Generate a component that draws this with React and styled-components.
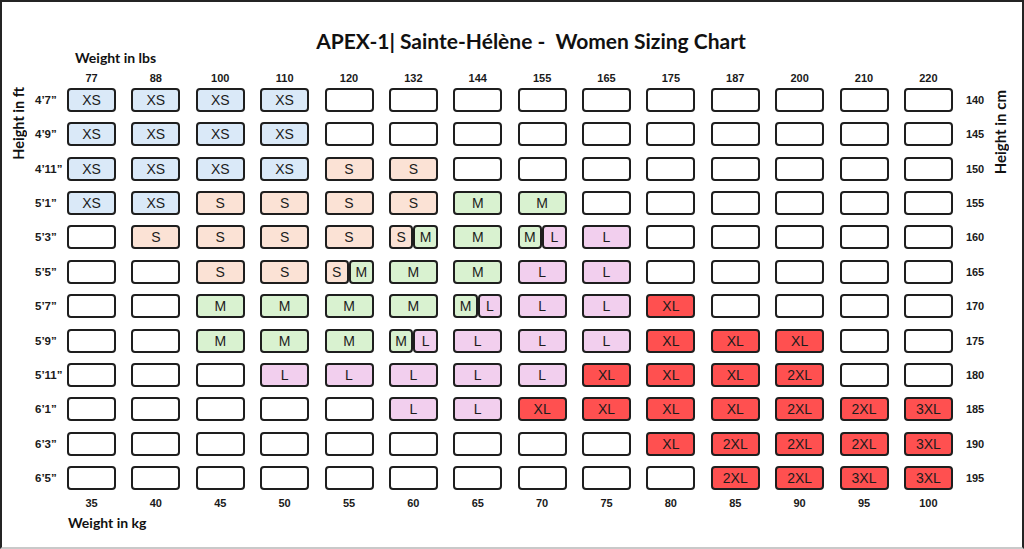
import React from 'react';
import styled, { createGlobalStyle } from 'styled-components';

const SIZE_BG = {
	XS: '#dae9f8',
	S: '#fbe2d5',
	M: '#d9f2d0',
	L: '#f2cfee',
	XL: '#ff5050',
	'2XL': '#ff5050',
	'3XL': '#ff5050',
};

const LBS = [77, 88, 100, 110, 120, 132, 144, 155, 165, 175, 187, 200, 210, 220];
const KG = [35, 40, 45, 50, 55, 60, 65, 70, 75, 80, 85, 90, 95, 100];

// '-' is an empty box, 'S|M' is a box split in two
const ROWS = [
	{ ft: '4’7”', cm: 140, cells: 'XS XS XS XS - - - - - - - - - -' },
	{ ft: '4’9”', cm: 145, cells: 'XS XS XS XS - - - - - - - - - -' },
	{ ft: '4’11”', cm: 150, cells: 'XS XS XS XS S S - - - - - - - -' },
	{ ft: '5’1”', cm: 155, cells: 'XS XS S S S S M M - - - - - -' },
	{ ft: '5’3”', cm: 160, cells: '- S S S S S|M M M|L L - - - - -' },
	{ ft: '5’5”', cm: 165, cells: '- - S S S|M M M L L - - - - -' },
	{ ft: '5’7”', cm: 170, cells: '- - M M M M M|L L L XL - - - -' },
	{ ft: '5’9”', cm: 175, cells: '- - M M M M|L L L L XL XL XL - -' },
	{ ft: '5’11”', cm: 180, cells: '- - - L L L L L XL XL XL 2XL - -' },
	{ ft: '6’1”', cm: 185, cells: '- - - - - L L XL XL XL XL 2XL 2XL 3XL' },
	{ ft: '6’3”', cm: 190, cells: '- - - - - - - - - XL 2XL 2XL 2XL 3XL' },
	{ ft: '6’5”', cm: 195, cells: '- - - - - - - - - - 2XL 2XL 3XL 3XL' },
];

function SizeBox({ value }) {
	if (value === '-') return <Cell />;
	if (value.includes('|')) {
		const [a, b] = value.split('|');
		return (
			<SplitCell>
				<Cell $size={ a }>{ a }</Cell>
				<Cell $size={ b }>{ b }</Cell>
			</SplitCell>
		);
	}
	return <Cell $size={ value }>{ value }</Cell>;
}

export default function App() {
	return (
		<>
			<GlobalStyle />
			<Frame>
				<Title>APEX-1| Sainte-Hélène -&nbsp; Women Sizing Chart</Title>
				<Chart>
					<SideAxis $pad={ 36 } $width={ 33 }>
						<AxisLabel>Height in ft</AxisLabel>
					</SideAxis>

					<Main>
						<Caption $indent={ 40 }>Weight in lbs</Caption>
						<NumberRow $top>
							{ LBS.map((n) => <Num key={ n }>{ n }</Num>) }
						</NumberRow>

						<Rows>
							{ ROWS.map((row) => (
								<Row key={ row.cm }>
									<RowLabel>{ row.ft }</RowLabel>
									<Cells>
										{ row.cells.split(' ').map((v, i) => <SizeBox key={ i } value={ v } />) }
									</Cells>
									<RightLabel>{ row.cm }</RightLabel>
								</Row>
							)) }
						</Rows>

						<NumberRow>
							{ KG.map((n) => <Num key={ n }>{ n }</Num>) }
						</NumberRow>
						<Caption $indent={ 33 }>Weight in kg</Caption>
					</Main>

					<SideAxis $pad={ 39 } $width={ 20 }>
						<AxisLabel $long>Height in cm</AxisLabel>
					</SideAxis>
				</Chart>
			</Frame>
		</>
	);
}

const GlobalStyle = createGlobalStyle`
	html, body {
		margin: 0;
		padding: 0;
		background: #ffffff;
	}

	body {
		font-family: 'Liberation Sans', Arial, sans-serif;
		color: #1a1a1a;
	}
`;

const Frame = styled.div`
	width: 1024px;
	height: 549px;
	box-sizing: border-box;
	border: 2px solid #242424;
	border-bottom-color: #c9c9c9;
	background: #ffffff;
	overflow: hidden;
`;

const Title = styled.h1`
	margin: 29px 0 0;
	padding-left: 38px;
	text-align: center;
	font-family: Lato, 'Open Sans', sans-serif;
	font-weight: 700;
	font-size: 21px;
	line-height: 20px;
	color: #111111;
	white-space: pre;
`;

const Chart = styled.div`
	display: flex;
	align-items: flex-start;
`;

const SideAxis = styled.div`
	width: ${ (p) => p.$width }px;
	padding-top: ${ (p) => p.$pad }px;
	display: flex;
	justify-content: center;
	flex-shrink: 0;
`;

const AxisLabel = styled.div`
	writing-mode: vertical-rl;
	transform: rotate(180deg);
	font-family: Lato, 'Open Sans', sans-serif;
	font-weight: 700;
	font-size: ${ (p) => (p.$long ? 15 : 14.5) }px;
	line-height: 14px;
	color: #111111;
	white-space: nowrap;
`;

const Main = styled.div`
	display: flex;
	flex-direction: column;
`;

const Caption = styled.div`
	padding-left: ${ (p) => p.$indent }px;
	font-family: Lato, 'Open Sans', sans-serif;
	font-weight: 700;
	font-size: 14px;
	line-height: 14px;
	color: #111111;
`;

const NumberRow = styled.div`
	display: grid;
	grid-template-columns: repeat(14, 49px);
	column-gap: 15.385px;
	padding-left: 32px;
	margin: ${ (p) => (p.$top ? '7px 0 4px' : '7px 0 7px') };
`;

const Num = styled.div`
	text-align: center;
	font-weight: 700;
	font-size: 11px;
	line-height: 12px;
	color: #1a1a1a;
`;

const Rows = styled.div`
	display: flex;
	flex-direction: column;
	gap: 10.36px;
`;

const Row = styled.div`
	display: flex;
	align-items: center;
	height: 24px;
`;

const RowLabel = styled.div`
	width: 32px;
	flex-shrink: 0;
	font-weight: 700;
	font-size: 11.5px;
	white-space: nowrap;
	color: #1a1a1a;
`;

const Cells = styled.div`
	display: grid;
	grid-template-columns: repeat(14, 49px);
	column-gap: 15.385px;
`;

const Cell = styled.div`
	height: 24px;
	box-sizing: border-box;
	border: 2px solid #1e1e1e;
	border-radius: 4px;
	background: ${ (p) => SIZE_BG[p.$size] || '#ffffff' };
	display: flex;
	align-items: center;
	justify-content: center;
	font-size: 14px;
	color: #1c1c1c;
	min-width: 0;
`;

const SplitCell = styled.div`
	display: flex;

	${ Cell } {
		flex: 1;
	}
`;

const RightLabel = styled.div`
	margin-left: 13px;
	width: 24px;
	font-weight: 700;
	font-size: 11px;
	color: #1a1a1a;
`;
